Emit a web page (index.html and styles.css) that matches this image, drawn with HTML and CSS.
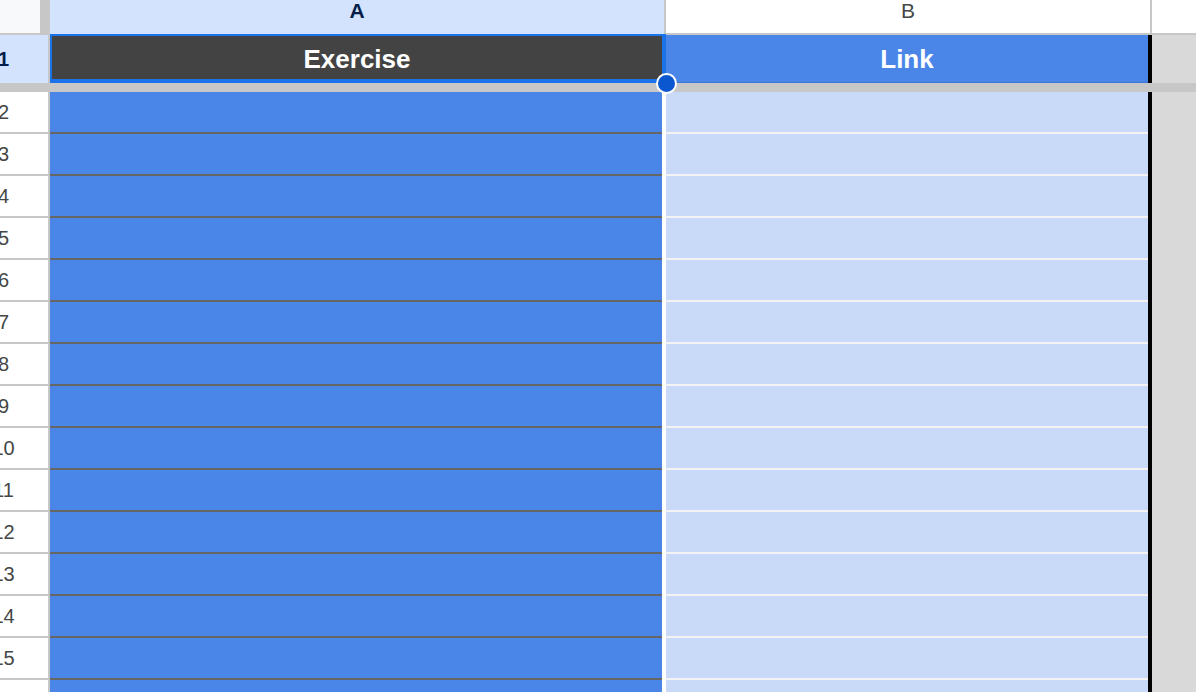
FILE: index.html
```html
<!DOCTYPE html>
<html lang="en">
<head>
<meta charset="utf-8">
<title>Sheet</title>
<link rel="stylesheet" href="styles.css">
</head>
<body>
<div class="sheet">
  <div class="row head-row">
    <div class="corner"></div>
    <div class="colhead colhead-a">A</div>
    <div class="colhead colhead-b">B</div>
    <div class="fill fill-white"></div>
  </div>
  <div class="row row-first">
    <div class="rowhead rowhead-sel">1</div>
    <div class="cell-sel">Exercise<span class="handle"></span></div>
    <div class="cell-link">Link</div>
    <div class="fill"></div>
  </div>
  <div class="freeze"></div>
  <div class="row"><div class="rowhead">2</div><div class="cell-a"></div><div class="cell-b"></div><div class="fill"></div></div>
  <div class="row"><div class="rowhead">3</div><div class="cell-a"></div><div class="cell-b"></div><div class="fill"></div></div>
  <div class="row"><div class="rowhead">4</div><div class="cell-a"></div><div class="cell-b"></div><div class="fill"></div></div>
  <div class="row"><div class="rowhead">5</div><div class="cell-a"></div><div class="cell-b"></div><div class="fill"></div></div>
  <div class="row"><div class="rowhead">6</div><div class="cell-a"></div><div class="cell-b"></div><div class="fill"></div></div>
  <div class="row"><div class="rowhead">7</div><div class="cell-a"></div><div class="cell-b"></div><div class="fill"></div></div>
  <div class="row"><div class="rowhead">8</div><div class="cell-a"></div><div class="cell-b"></div><div class="fill"></div></div>
  <div class="row"><div class="rowhead">9</div><div class="cell-a"></div><div class="cell-b"></div><div class="fill"></div></div>
  <div class="row"><div class="rowhead">10</div><div class="cell-a"></div><div class="cell-b"></div><div class="fill"></div></div>
  <div class="row"><div class="rowhead">11</div><div class="cell-a"></div><div class="cell-b"></div><div class="fill"></div></div>
  <div class="row"><div class="rowhead">12</div><div class="cell-a"></div><div class="cell-b"></div><div class="fill"></div></div>
  <div class="row"><div class="rowhead">13</div><div class="cell-a"></div><div class="cell-b"></div><div class="fill"></div></div>
  <div class="row"><div class="rowhead">14</div><div class="cell-a"></div><div class="cell-b"></div><div class="fill"></div></div>
  <div class="row"><div class="rowhead">15</div><div class="cell-a"></div><div class="cell-b"></div><div class="fill"></div></div>
  <div class="row"><div class="rowhead">16</div><div class="cell-a"></div><div class="cell-b"></div><div class="fill"></div></div>
</div>
</body>
</html>
```

FILE: styles.css
```css
html, body {
  margin: 0;
  padding: 0;
  height: 100%;
  overflow: hidden;
  background: #ffffff;
  font-family: "Liberation Sans", Arial, sans-serif;
}

.sheet {
  width: 100%;
  display: flex;
  flex-direction: column;
}

.row {
  display: flex;
  height: 42px;
  flex: none;
}

.fill {
  flex: 1;
  background: #d9d9d9;
}

.fill-white {
  background: #ffffff;
  box-shadow: inset 0 -2px 0 #c7c7c7;
}

/* header row */
.head-row {
  height: 35px;
}

.corner {
  width: 81px;
  margin-left: -41px;
  background: #f8f9fa;
  border-right: 10px solid #c7c7c7;
  box-shadow: inset 0 -2px 0 #c7c7c7;
}

.colhead {
  display: flex;
  justify-content: center;
  align-items: flex-start;
  font-size: 21px;
  line-height: 21px;
  border-right: 2px solid #c7c7c7;
  box-shadow: inset 0 -2px 0 #c7c7c7;
}

.colhead-a {
  width: 614px;
  background: #d3e3fd;
  color: #041e49;
  font-weight: bold;
  box-shadow: inset 0 -1px 0 #1a73e8;
}

.colhead-b {
  width: 484px;
  background: #ffffff;
  color: #444746;
}

/* row 1 */
.row-first {
  height: 48px;
}

.rowhead {
  box-sizing: border-box;
  width: 91px;
  margin-left: -41px;
  border-right: 2px solid #c7c7c7;
  box-shadow: inset 0 -2px 0 #c7c7c7;
  background: #ffffff;
  color: #444746;
  font-size: 20px;
  display: flex;
  align-items: center;
  justify-content: center;
  padding-bottom: 2px;
}

.rowhead-sel {
  background: #d3e3fd;
  color: #041e49;
  font-weight: bold;
  box-shadow: none;
  padding-bottom: 0;
}

.cell-sel {
  position: relative;
  box-sizing: border-box;
  width: 616px;
  height: 49px;
  margin-top: -1px;
  padding-top: 3px;
  background: #434343;
  border-style: solid;
  border-color: #1a73e8;
  border-width: 2px 4px 4px 2px;
  color: #ffffff;
  font-weight: bold;
  font-size: 26px;
  display: flex;
  align-items: center;
  justify-content: center;
}

.handle {
  position: absolute;
  right: -15px;
  bottom: -15px;
  width: 21px;
  height: 21px;
  box-sizing: border-box;
  border-radius: 50%;
  background: #0b57d0;
  border: 2px solid #ffffff;
  z-index: 2;
}

.cell-link {
  width: 482px;
  background: #4a86e8;
  border-right: 4px solid #000000;
  box-shadow: inset 0 -1px 0 #3c78d8;
  color: #ffffff;
  font-weight: bold;
  font-size: 26px;
  display: flex;
  align-items: center;
  justify-content: center;
}

.freeze {
  height: 9px;
  background: #c7c7c7;
  flex: none;
}

/* body rows */
.cell-a {
  width: 612px;
  background: #4a86e8;
  border-right: 4px solid #ffffff;
  box-shadow: inset 0 -2px 0 #666666;
}

.cell-b {
  width: 482px;
  background: #c9daf8;
  border-right: 4px solid #000000;
  box-shadow: inset 0 -2px 0 #f3f3f3;
}
```
